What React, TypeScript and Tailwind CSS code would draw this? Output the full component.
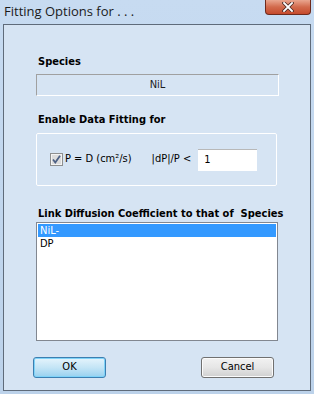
import React from "react";

const ui = { fontFamily: "'DejaVu Sans Condensed', 'DejaVu Sans', sans-serif" };

function CheckBox() {
  return (
    <svg width="13" height="13" viewBox="0 0 13 13" className="shrink-0">
      <rect x="0.5" y="0.5" width="12" height="12" fill="#f4f4f4" stroke="#8e8f8f" />
      <rect x="2" y="2" width="9" height="9" fill="#dcdcdc" />
      <path d="M3 6.5 L5.3 9.5 L10 2.8" fill="none" stroke="#4d6185" strokeWidth="1.8" />
    </svg>
  );
}

export default function App() {
  return (
    <div className="w-[314px] h-[394px] bg-gradient-to-b from-[#c7dbf1] to-[#bcd2ea] flex flex-col overflow-hidden" style={ui}>
      {/* Title bar */}
      <div className="h-[24px] flex items-start justify-between shrink-0">
        <span
          className="pl-[4px] pt-[3px] text-[13px] leading-[17px] text-[#1a1a1a]"
          style={{ fontFamily: "'Open Sans', 'Noto Sans', sans-serif" }}
        >
          Fitting Options for . . .
        </span>
        <div className="mr-[3px] w-[46px] h-[15px] rounded-b-[4px] border border-t-0 border-[#6e2a1c] bg-gradient-to-b from-[#e9a68f] via-[#d26a4c] to-[#c54a2c] flex items-center justify-center">
          <svg width="12" height="10" viewBox="0 0 12 10">
            <path d="M2 1 L10 9 M10 1 L2 9" stroke="#4a2a24" strokeWidth="3.4" strokeLinecap="square" />
            <path d="M2 1 L10 9 M10 1 L2 9" stroke="#ffffff" strokeWidth="1.8" strokeLinecap="square" />
          </svg>
        </div>
      </div>

      {/* Client area */}
      <div className="mx-[3px] h-[367px] border border-[#5f6b7a] bg-[#d6e4f3] flex flex-col text-[11px] text-black">
        <div className="pt-[30px] pl-[34px] font-bold leading-[13px]">Species</div>
        <div className="ml-[32px] mt-[6px] w-[243px] h-[22px] border border-t-[#a0a0a0] border-l-[#a0a0a0] border-r-white border-b-white flex items-center justify-center text-[#1c1c1c]">
          NiL
        </div>

        <div className="pt-[17px] pl-[34px] font-bold leading-[13px]">Enable Data Fitting for</div>
        <div className="ml-[32px] mt-[7px] w-[241px] h-[53px] border border-white rounded-[2px] flex items-center">
          <div className="ml-[13px] flex items-center gap-[2px]">
            <CheckBox />
            <span>P = D (cm²/s)</span>
          </div>
          <span className="ml-[20px]">|dP|/P &lt;</span>
          <div className="ml-[7px] w-[59px] h-[22px] bg-white border-t border-[#b8b8b8] pl-[6px] pt-[3px] leading-[13px]">1</div>
        </div>

        <div className="pt-[21px] pl-[34px] font-bold leading-[13px]">Link Diffusion Coefficient to that of&nbsp; Species</div>
        <div className="ml-[32px] mt-[2px] w-[242px] h-[119px] bg-white border border-[#828790] p-[1px] leading-[13px]">
          <div className="h-[13px] bg-[#3399ff] text-white pl-[2px]">NiL-</div>
          <div className="h-[13px] pl-[2px]">DP</div>
        </div>

        <div className="mt-[16px] flex">
          <button className="ml-[29px] w-[73px] h-[21px] rounded-[3px] border border-[#3c7fb1] bg-gradient-to-b from-[#e5f4fc] via-[#c4e5f6] to-[#98d1ef] shadow-[inset_0_0_0_1px_#7fd3f8] text-[11px] text-black flex items-center justify-center">
            OK
          </button>
          <button className="ml-[95px] w-[73px] h-[21px] rounded-[3px] border border-[#707070] bg-gradient-to-b from-[#f2f2f2] via-[#e6e6e6] to-[#d0d0d0] shadow-[inset_0_0_0_1px_#fbfbfb] text-[11px] text-black flex items-center justify-center">
            Cancel
          </button>
        </div>
      </div>
    </div>
  );
}
